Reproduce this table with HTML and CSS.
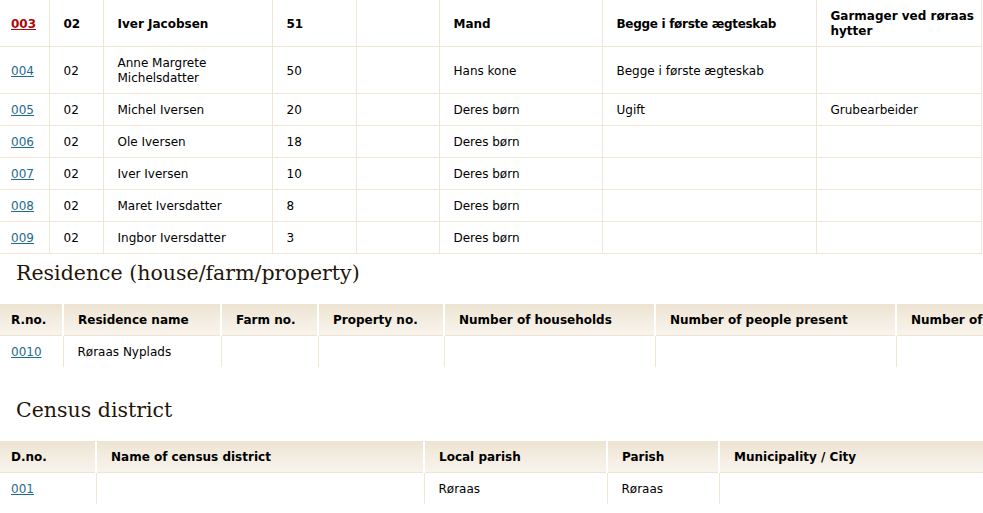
FILE: index.html
```html
<!DOCTYPE html>
<html lang="no">
<head>
<meta charset="utf-8">
<title>Census</title>
<link rel="stylesheet" href="styles.css">
</head>
<body>
<div class="page">
  <table class="grid persons">
    <colgroup>
      <col style="width:49px"><col style="width:54px"><col style="width:169px"><col style="width:84px"><col style="width:83px"><col style="width:163px"><col style="width:214px"><col style="width:165px">
    </colgroup>
    <tbody>
      <tr class="current">
        <td><a class="cur" href="#">003</a></td><td>02</td><td>Iver Jacobsen</td><td>51</td><td></td><td>Mand</td><td><span class="cell-text">Begge i første ægteskab</span></td><td>Garmager ved røraas hytter</td>
      </tr>
      <tr>
        <td><a href="#">004</a></td><td>02</td><td>Anne Margrete Michelsdatter</td><td>50</td><td></td><td>Hans kone</td><td>Begge i første ægteskab</td><td></td>
      </tr>
      <tr>
        <td><a href="#">005</a></td><td>02</td><td>Michel Iversen</td><td>20</td><td></td><td>Deres børn</td><td>Ugift</td><td>Grubearbeider</td>
      </tr>
      <tr>
        <td><a href="#">006</a></td><td>02</td><td>Ole Iversen</td><td>18</td><td></td><td>Deres børn</td><td></td><td></td>
      </tr>
      <tr>
        <td><a href="#">007</a></td><td>02</td><td>Iver Iversen</td><td>10</td><td></td><td>Deres børn</td><td></td><td></td>
      </tr>
      <tr>
        <td><a href="#">008</a></td><td>02</td><td>Maret Iversdatter</td><td>8</td><td></td><td>Deres børn</td><td></td><td></td>
      </tr>
      <tr>
        <td><a href="#">009</a></td><td>02</td><td>Ingbor Iversdatter</td><td>3</td><td></td><td>Deres børn</td><td></td><td></td>
      </tr>
    </tbody>
  </table>

  <h2 class="section-title">Residence (house/farm/property)</h2>
  <div class="table-clip residence-wrap">
    <table class="grid headed residence">
      <colgroup>
        <col style="width:63px"><col style="width:158px"><col style="width:97px"><col style="width:126px"><col style="width:211px"><col style="width:241px"><col style="width:220px">
      </colgroup>
      <thead>
        <tr><th>R.no.</th><th>Residence name</th><th>Farm no.</th><th>Property no.</th><th>Number of households</th><th>Number of people present</th><th>Number of residents</th></tr>
      </thead>
      <tbody>
        <tr><td><a href="#">0010</a></td><td>Røraas Nyplads</td><td></td><td></td><td></td><td></td><td></td></tr>
      </tbody>
    </table>
  </div>

  <h2 class="section-title">Census district</h2>
  <div class="table-clip">
    <table class="grid headed district">
      <colgroup>
        <col style="width:96px"><col style="width:328px"><col style="width:183px"><col style="width:112px"><col style="width:280px">
      </colgroup>
      <thead>
        <tr><th>D.no.</th><th>Name of census district</th><th>Local parish</th><th>Parish</th><th>Municipality / City</th></tr>
      </thead>
      <tbody>
        <tr><td><a href="#">001</a></td><td></td><td>Røraas</td><td>Røraas</td><td></td></tr>
      </tbody>
    </table>
  </div>
</div>
</body>
</html>
```

FILE: styles.css
```css
html, body {
  margin: 0;
  padding: 0;
  background: #ffffff;
  overflow: hidden;
}

.page {
  width: 983px;
  overflow: hidden;
  font-family: "DejaVu Sans", Verdana, sans-serif;
  font-size: 12px;
  color: #000;
}

.grid {
  border-collapse: collapse;
  table-layout: fixed;
}

.grid td,
.grid th {
  padding: 9px 0 7px 14px;
  line-height: 15px;
  text-align: left;
  vertical-align: middle;
  border: 1px solid #f0e6d5;
}

.grid td:first-child,
.grid th:first-child {
  padding-left: 11px;
  border-left: none;
}

.persons {
  width: 981px;
}

.persons tr:first-child td {
  border-top: none;
}

.persons .current td {
  font-weight: bold;
}

.cell-text {
  display: inline-block;
  letter-spacing: -0.3px;
}

.persons tr:last-child td {
  border-bottom: 1px solid #f0e6d5;
}

.grid a {
  color: #1d6b8e;
  text-decoration: underline;
}

.grid a.cur {
  color: #a80a0a;
  font-weight: bold;
}

.section-title {
  font-family: "DejaVu Serif", Georgia, serif;
  font-weight: normal;
  font-size: 20.5px;
  line-height: 26px;
  color: #1f160a;
  margin: 6px 0 18px 16px;
}

.table-clip {
  width: 983px;
  overflow: hidden;
}

.residence-wrap {
  margin-bottom: 30px;
}

.residence {
  width: 1116px;
}

.district {
  width: 999px;
}

.headed th {
  font-weight: bold;
  background: linear-gradient(to bottom, #ede3d2 0%, #f4eee3 60%, #f8f4ed 100%);
  border-top: none;
  border-left: 2px solid #ffffff;
  border-right: 2px solid #ffffff;
  border-bottom: 1px solid #efe4d1;
}

.headed th:first-child {
  border-left: none;
}

.headed td {
  border-top: none;
  border-bottom: none;
}
```
